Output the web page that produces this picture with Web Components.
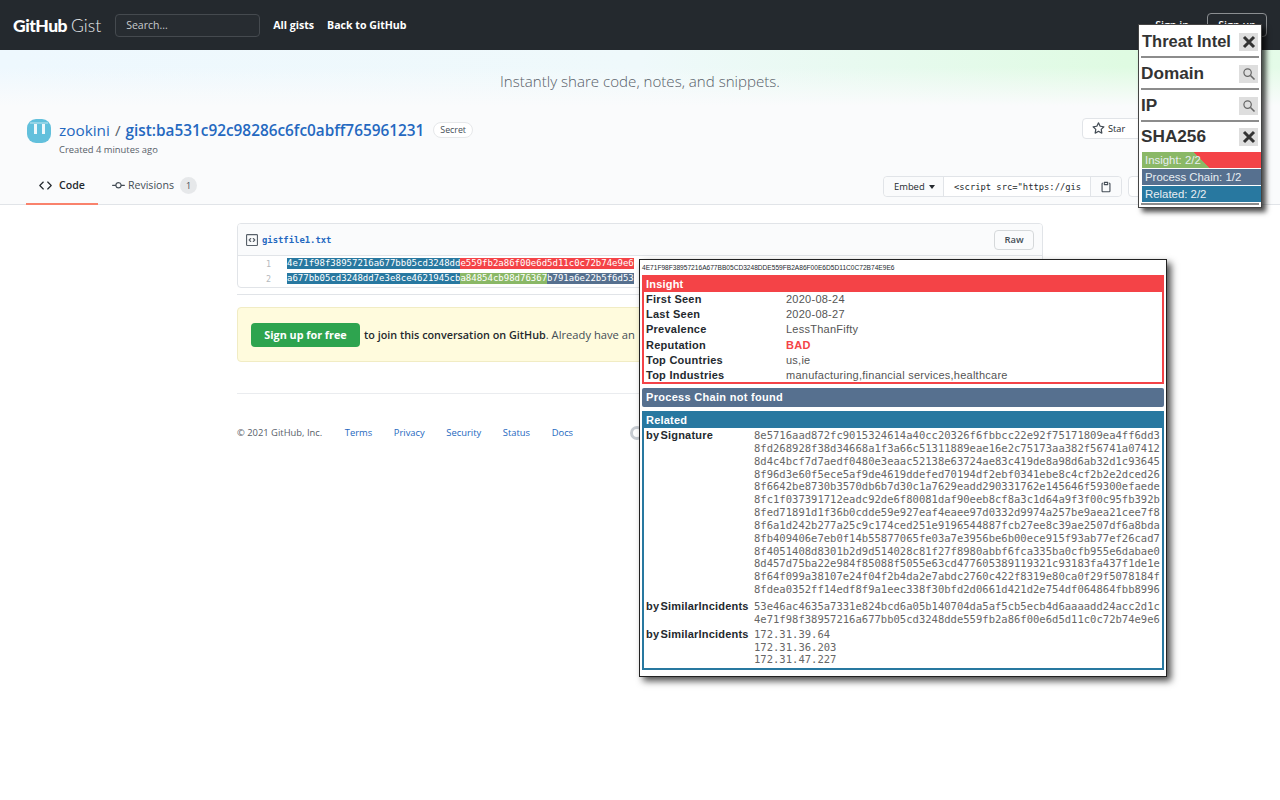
<!DOCTYPE html>
<html lang="en">
<head>
<meta charset="utf-8">
<title>Gist</title>
<style>
  html, body { margin: 0; height: 100%; background: #fff; }
  body { font-family: "Open Sans", "Liberation Sans", sans-serif; position: relative; height: 800px; overflow: hidden; }
</style>
</head>
<body>
<gist-header></gist-header>
<gist-banner>Instantly share code, notes, and snippets.</gist-banner>
<gist-pagehead></gist-pagehead>
<gist-main>
  <gist-file></gist-file>
  <signup-notice></signup-notice>
  <gist-footer></gist-footer>
</gist-main>
<threat-panel></threat-panel>
<intel-details></intel-details>

<script>
const ICONS = {
  code: 'M4.72 3.22a.75.75 0 011.06 1.06L2.06 8l3.72 3.72a.75.75 0 11-1.06 1.06L.47 8.53a.75.75 0 010-1.06l4.25-4.25zm6.56 0a.75.75 0 10-1.06 1.06L13.94 8l-3.72 3.72a.75.75 0 101.06 1.06l4.25-4.25a.75.75 0 000-1.06l-4.25-4.25z',
  commit: 'M10.5 7.75a2.5 2.5 0 11-5 0 2.5 2.5 0 015 0zm1.43.75a4.002 4.002 0 01-7.86 0H.75a.75.75 0 110-1.5h3.32a4.001 4.001 0 017.86 0h3.32a.75.75 0 110 1.5h-3.32z',
  star: 'M8 .25a.75.75 0 01.673.418l1.882 3.815 4.21.612a.75.75 0 01.416 1.279l-3.046 2.97.719 4.192a.75.75 0 01-1.088.791L8 12.347l-3.766 1.98a.75.75 0 01-1.088-.79l.72-4.194L.818 6.374a.75.75 0 01.416-1.28l4.21-.611L7.327.668A.75.75 0 018 .25zm0 2.445L6.615 5.5a.75.75 0 01-.564.41l-3.097.45 2.24 2.184a.75.75 0 01.216.664l-.528 3.084 2.769-1.456a.75.75 0 01.698 0l2.77 1.456-.53-3.084a.75.75 0 01.216-.664l2.24-2.183-3.096-.45a.75.75 0 01-.564-.41L8 2.694v.001z',
  clippy: 'M5.75 1a.75.75 0 00-.75.75v3c0 .414.336.75.75.75h4.5a.75.75 0 00.75-.75v-3a.75.75 0 00-.75-.75h-4.5zm.75 3V2.5h3V4h-3zm-2.874-.467a.75.75 0 00-.752-1.298A1.75 1.75 0 002 3.75v9.5c0 .966.784 1.75 1.75 1.75h8.5A1.75 1.75 0 0014 13.25v-9.5a1.75 1.75 0 00-.874-1.515.75.75 0 10-.752 1.298.25.25 0 01.126.217v9.5a.25.25 0 01-.25.25h-8.5a.25.25 0 01-.25-.25v-9.5a.25.25 0 01.126-.217z',
  file: 'M1.75 1.5a.25.25 0 00-.25.25v12.5c0 .138.112.25.25.25h12.5a.25.25 0 00.25-.25V1.75a.25.25 0 00-.25-.25H1.75zM0 1.75C0 .784.784 0 1.75 0h12.5C15.216 0 16 .784 16 1.75v12.5A1.75 1.75 0 0114.25 16H1.75A1.75 1.75 0 010 14.25V1.75zm9.22 3.72a.75.75 0 000 1.06L10.69 8 9.22 9.47a.75.75 0 101.06 1.06l2-2a.75.75 0 000-1.06l-2-2a.75.75 0 00-1.06 0zM6.78 6.53a.75.75 0 00-1.06-1.06l-2 2a.75.75 0 000 1.06l2 2a.75.75 0 101.06-1.06L5.31 8l1.47-1.47z'
};

function octicon(name, size, color) {
  return `<svg width="${size}" height="${size}" viewBox="0 0 16 16" fill="${color}" style="display:block;flex:none"><path fill-rule="evenodd" d="${ICONS[name]}"/></svg>`;
}

// small base class so each element only has to return its markup
class ShadowEl extends HTMLElement {
  constructor() {
    super();
    this.attachShadow({ mode: 'open' });
  }
  connectedCallback() {
    this.shadowRoot.innerHTML = this.render();
  }
}

class GistHeader extends ShadowEl {
  render() {
    return `
      <style>
        :host { display: flex; align-items: center; height: 50px; background: #24292e; color: #fff; padding: 0 13px; box-sizing: border-box; }
        .logo { display: flex; align-items: baseline; gap: 4px; font-size: 17.5px; letter-spacing: -.5px; margin-right: 14px; }
        .logo b { font-family: Lato, sans-serif; font-weight: 900; }
        .logo span { font-family: Lato, sans-serif; font-weight: 300; color: #e6e8ea; letter-spacing: 0; }
        .search { width: 145px; height: 23px; box-sizing: border-box; border: 1px solid #454a4f; border-radius: 4px; padding-left: 10px; font-size: 10.5px; line-height: 20px; color: #c8cbce; background: #272c31; margin-right: 13px; }
        nav { display: flex; gap: 13px; font-size: 10.6px; font-weight: 700; }
        .right { margin-left: auto; display: flex; align-items: center; gap: 18px; font-size: 10.6px; font-weight: 600; }
        .signup { border: 1px solid #8b8e91; border-radius: 4px; width: 60px; height: 24px; box-sizing: border-box; text-align: center; line-height: 23px; }
      </style>
      <div class="logo"><b>GitHub</b><span>Gist</span></div>
      <div class="search">Search...</div>
      <nav><span>All gists</span><span>Back to GitHub</span></nav>
      <div class="right"><span>Sign in</span><span class="signup">Sign up</span></div>
    `;
  }
}

class GistBanner extends ShadowEl {
  render() {
    return `
      <style>
        :host { display: flex; align-items: center; justify-content: center; height: 56px; box-sizing: border-box; padding-top: 6px; font-size: 15.1px; font-weight: 300; color: #586069;
          background: linear-gradient(180deg, rgba(250,251,252,0) 30%, #fafbfc 100%), linear-gradient(90deg, #eef8fe 0%, #eff9fb 50%, #dffbe2 88%, #e4fbe8 100%); }
      </style>
      <slot></slot>
    `;
  }
}

class GistPagehead extends ShadowEl {
  render() {
    return `
      <style>
        :host { display: flex; flex-direction: column; height: 99px; box-sizing: border-box; background: #fafbfc; border-bottom: 1px solid #e1e4e8; padding: 12px 0 0 27px; position: relative; color: #24292e; }
        .top { display: flex; align-items: flex-start; height: 54px; }
        .avatar { width: 24px; height: 24px; margin-right: 8px; flex: none; display: block; margin-top: 1px; }
        .title { display: flex; align-items: center; font-size: 15.35px; color: #586069; height: 24px; white-space: nowrap; }
        .title a { color: #2468c0; }
        .title b { font-weight: 600; color: #2468c0; }
        .sep { margin: 0 5px; }
        .badge { margin-left: 9px; font-size: 8.8px; color: #444d56; border: 1px solid #e6e8ea; border-radius: 9px; padding: 0 6px; height: 14px; line-height: 14px; background: #fff; }
        .meta { font-size: 9.4px; color: #586069; margin-top: 1px; }
        .act { margin-left: auto; margin-right: 126px; display: flex; align-items: center; gap: 3px; font-size: 9.2px; color: #24292e; height: 21px; width: 72px; box-sizing: border-box; border: 1px solid #e1e4e8; border-radius: 4px; background: #fff; padding-left: 9px; }
        .tabs { display: flex; height: 32px; margin-left: -1px; font-size: 10.6px; }
        .tab { display: flex; align-items: center; box-sizing: border-box; height: 32px; white-space: nowrap; }
        .tab.on { gap: 7px; height: 33px; padding: 0 13px 5px; border-bottom: 2px solid #f9826c; font-weight: 600; }
        .tab.rev { gap: 3px; padding: 0 0 6px 14px; color: #444d56; }
        .count { background: #e6e8ea; border-radius: 50%; width: 17px; height: 17px; line-height: 17px; text-align: center; font-size: 9px; margin-left: 3px; }
        .embed { position: absolute; left: 883px; top: 70px; display: flex; height: 21px; box-sizing: border-box; border: 1px solid #e1e4e8; border-radius: 4px; background: #fff; font-size: 9.4px; align-items: center; }
        .embed > span { display: flex; align-items: center; height: 100%; }
        .emb { width: 60px; padding-left: 10px; box-sizing: border-box; background: #fafbfc; border-right: 1px solid #e1e4e8; gap: 4px; border-radius: 4px 0 0 4px; }
        .caret { width: 0; height: 0; border: 3px solid transparent; border-top: 4px solid #24292e; border-bottom: 0; }
        .url { width: 147px; padding-left: 10px; box-sizing: border-box; border-right: 1px solid #e1e4e8; font-family: "DejaVu Sans Mono", monospace; font-size: 8.8px; color: #24292e; white-space: nowrap; }
        .clip { width: 30px; justify-content: center; background: #fafbfc; border-radius: 0 4px 4px 0; }
        .dl { position: absolute; left: 1128px; top: 70px; width: 60px; height: 21px; box-sizing: border-box; border: 1px solid #e1e4e8; border-radius: 4px; background: #fff; }
      </style>
      <div class="top">
        <svg class="avatar" viewBox="0 0 24 24">
          <rect width="24" height="24" rx="9" fill="#62c0dc"/>
          <path d="M3 3h18v2H3z" fill="#93d4e6"/>
          <rect x="7" y="5" width="3" height="10" fill="#eef8fb"/>
          <rect x="15" y="5" width="3" height="10" fill="#eef8fb"/>
        </svg>
        <div>
          <div class="title"><a>zookini</a><span class="sep">/</span><b>gist:ba531c92c98286c6fc0abff765961231</b><span class="badge">Secret</span></div>
          <div class="meta">Created 4 minutes ago</div>
        </div>
        <div class="act">${octicon('star', 13, '#444d56')}Star</div>
      </div>
      <div class="tabs">
        <div class="tab on">${octicon('code', 13, '#24292e')}Code</div>
        <div class="tab rev">${octicon('commit', 13, '#444d56')}Revisions<span class="count">1</span></div>
      </div>
      <div class="embed">
        <span class="emb">Embed<i class="caret"></i></span>
        <span class="url">&lt;script src="https://gis</span>
        <span class="clip">${octicon('clippy', 12, '#444d56')}</span>
      </div>
      <div class="dl"></div>
    `;
  }
}

class GistMain extends ShadowEl {
  render() {
    return `
      <style>
        :host { display: block; width: 806px; margin: 18px 0 0 237px; }
      </style>
      <slot></slot>
    `;
  }
}

class GistFile extends ShadowEl {
  render() {
    return `
      <style>
        :host { display: block; padding-bottom: 6px; border-bottom: 1px solid #e1e4e8; }
        .box { border: 1px solid #e1e4e8; border-radius: 4px; overflow: hidden; background: #fff; }
        .head { display: flex; align-items: center; height: 32px; padding: 0 8px; background: #fafbfc; border-bottom: 1px solid #e1e4e8; box-sizing: border-box; }
        .name { font-family: "DejaVu Sans Mono", monospace; font-weight: 700; font-size: 8.9px; color: #2468c0; margin-left: 4px; }
        .raw { margin-left: auto; width: 40px; height: 20px; line-height: 18px; box-sizing: border-box; text-align: center; font-size: 9.4px; font-weight: 600; border: 1px solid #d5d8da; border-radius: 4px; background: #fafbfc; color: #444d56; }
        .code { padding: 0 0 1px; font-family: "DejaVu Sans Mono", monospace; font-size: 9px; }
        .line { display: flex; height: 15px; align-items: center; white-space: nowrap; color: #fff; }
        .num { width: 33px; text-align: right; color: #b5b9bd; font-size: 8.4px; margin-right: 16px; flex: none; }
        .line span.h { height: 11px; line-height: 11px; }
        .blue { background: #2878a0; } .red { background: #f44347; } .green { background: #8ab866; } .slate { background: #56708f; }
      </style>
      <div class="box">
        <div class="head">${octicon('file', 12, '#586069')}<span class="name">gistfile1.txt</span><span class="raw">Raw</span></div>
        <div class="code">
          <div class="line"><span class="num">1</span><span class="h blue">4e71f98f38957216a677bb05cd3248dd</span><span class="h red">e559fb2a86f00e6d5d11c0c72b74e9e6</span></div>
          <div class="line"><span class="num">2</span><span class="h blue">a677bb05cd3248dd7e3e8ce4621945cb</span><span class="h green">a84854cb98d76367</span><span class="h slate">b791a6e22b5f6d53</span></div>
        </div>
      </div>
    `;
  }
}

class SignupNotice extends ShadowEl {
  render() {
    return `
      <style>
        :host { display: flex; align-items: center; gap: 4px; margin-top: 12px; height: 55px; box-sizing: border-box; padding-left: 13px; background: #fffbdd; border: 1px solid #f1ecc4; border-radius: 4px; font-size: 10.8px; color: #24292e; white-space: nowrap; }
        .btn { width: 109px; height: 24px; line-height: 24px; text-align: center; border-radius: 4px; background: #2ea44f; color: #fff; font-weight: 700; }
        .rest { color: #444d56; font-size: 11.2px; }
      </style>
      <span class="btn">Sign up for free</span>
      <span><span style="font-weight:600">to join this conversation on GitHub</span><span class="rest">. Already have an</span></span>
    `;
  }
}

class GistFooter extends ShadowEl {
  render() {
    return `
      <style>
        :host { display: flex; align-items: center; margin-top: 31px; height: 77px; border-top: 1px solid #eaecef; font-size: 9.4px; color: #586069; white-space: nowrap; }
        a { color: #2468c0; }
        .left { display: flex; width: 393px; }
        .links { display: flex; gap: 21.6px; margin-left: 22.6px; }
        .mark { width: 14px; height: 14px; border-radius: 50%; border: 3px solid #c6cbd1; box-sizing: border-box; }
      </style>
      <div class="left">
        <span>© 2021 GitHub, Inc.</span>
        <span class="links"><a>Terms</a><a>Privacy</a><a>Security</a><a>Status</a><a>Docs</a></span>
      </div>
      <span class="mark"></span>
    `;
  }
}

class ThreatPanel extends ShadowEl {
  render() {
    const row = (label, icon, cls = '') => `
      <div class="row ${cls}"><span>${label}</span><i class="btn">${icon === 'x'
        ? '<svg width="14" height="14" viewBox="0 0 14 14"><path d="M2 2l10 10M12 2L2 12" stroke="#333" stroke-width="3" fill="none"/></svg>'
        : '<svg width="14" height="14" viewBox="0 0 14 14"><circle cx="5.6" cy="5.6" r="3.7" stroke="#666" stroke-width="1.2" fill="none"/><path d="M8.5 8.5l4 4" stroke="#666" stroke-width="1.6" fill="none"/></svg>'}</i></div>`;
    return `
      <style>
        :host { position: absolute; left: 1138px; top: 24px; width: 124px; height: 184px; box-sizing: border-box; background: #fff; border: 1px solid #444; box-shadow: 4px 4px 5px rgba(0,0,0,.7); padding: 1px 2px 0; font-family: "Liberation Sans", Arial, sans-serif; color: #333; }
        .row { display: flex; align-items: center; justify-content: space-between; height: 32px; box-sizing: border-box; padding: 1px 1px 0 0; border-bottom: 2px solid #8c8c8c; font-weight: 700; font-size: 17.2px; white-space: nowrap; }
        .row.title span { padding-left: 1px; font-size: 16.5px; }
        .row.last { border-bottom: 0; height: 27px; padding-top: 2px; }
        .btn { display: flex; align-items: center; justify-content: center; width: 19px; height: 18px; background: #dedede; }
        .bar { height: 16px; line-height: 16px; margin: 0 -2px 1px 1px; padding-left: 3px; font-size: 11.4px; color: #e8eef2; white-space: nowrap; }
        .bar.first { margin-top: 3px; background: linear-gradient(45deg, #8ab866 50%, #f44347 50%); }
        .line { border-top: 2px solid #8c8c8c; }
      </style>
      ${row('Threat Intel', 'x', 'title')}
      ${row('Domain', 'search')}
      ${row('IP', 'search')}
      ${row('SHA256', 'x', 'last')}
      <div class="bar first">Insight: 2/2</div>
      <div class="bar" style="background:#56708f">Process Chain: 1/2</div>
      <div class="bar" style="background:#2878a0">Related: 2/2</div>
      <div class="line"></div>
    `;
  }
}

class IntelDetails extends ShadowEl {
  render() {
    const sig = `8e5716aad872fc9015324614a40cc20326f6fbbcc22e92f75171809ea4ff6dd3
8fd268928f38d34668a1f3a66c51311889eae16e2c75173aa382f56741a07412
8d4c4bcf7d7aedf0480e3eaac52138e63724ae83c419de8a98d6ab32d1c93645
8f96d3e60f5ece5af9de4619ddefed70194df2ebf0341ebe8c4cf2b2e2dced26
8f6642be8730b3570db6b7d30c1a7629eadd290331762e145646f59300efaede
8fc1f037391712eadc92de6f80081daf90eeb8cf8a3c1d64a9f3f00c95fb392b
8fed71891d1f36b0cdde59e927eaf4eaee97d0332d9974a257be9aea21cee7f8
8f6a1d242b277a25c9c174ced251e9196544887fcb27ee8c39ae2507df6a8bda
8fb409406e7eb0f14b55877065fe03a7e3956be6b00ece915f93ab77ef26cad7
8f4051408d8301b2d9d514028c81f27f8980abbf6fca335ba0cfb955e6dabae0
8d457d75ba22e984f85088f5055e63cd477605389119321c93183fa437f1de1e
8f64f099a38107e24f04f2b4da2e7abdc2760c422f8319e80ca0f29f5078184f
8fdea0352ff14edf8f9a1eec338f30bfd2d0661d421d2e754df064864fbb8996`;
    const sim = `53e46ac4635a7331e824bcd6a05b140704da5af5cb5ecb4d6aaaadd24acc2d1c
4e71f98f38957216a677bb05cd3248dde559fb2a86f00e6d5d11c0c72b74e9e6`;
    const ips = `172.31.39.64
172.31.36.203
172.31.47.227`;
    const kv = [
      ['First Seen', '2020-08-24'], ['Last Seen', '2020-08-27'], ['Prevalence', 'LessThanFifty'],
      ['Reputation', '<b class="bad">BAD</b>'], ['Top Countries', 'us,ie'], ['Top Industries', 'manufacturing,financial services,healthcare']
    ];
    return `
      <style>
        :host { position: absolute; left: 639px; top: 259px; width: 528px; height: 418px; box-sizing: border-box; background: #fff; border: 1px solid #222; box-shadow: 4px 4px 7px rgba(0,0,0,.7); padding: 0 2px; font-family: "Liberation Sans", Arial, sans-serif; color: #333; font-size: 11px; }
        .sha { height: 15px; line-height: 16px; font-size: 6.6px; color: #24292e; white-space: nowrap; }
        section { margin-bottom: 4px; border-radius: 2px 2px 0 0; }
        h4 { margin: 0; height: 17px; line-height: 18px; padding-left: 4px; font-size: 11px; font-weight: 700; letter-spacing: .2px; color: #fff; }
        .insight { border: 2px solid #f44347; border-top: 0; height: 109px; box-sizing: border-box; }
        .insight h4 { background: #f44347; margin: 0 -2px; }
        .kv { display: grid; grid-template-columns: 140px 1fr; grid-auto-rows: 15.2px; line-height: 15.2px; padding-left: 2px; letter-spacing: .25px; }
        .kv b { font-weight: 700; color: #24292e; }
        .kv span { color: #555; }
        .bad { color: #f44347 !important; }
        .chain { background: #56708f; height: 19px; line-height: 19px; padding-left: 4px; font-weight: 700; letter-spacing: .3px; color: #fff; border-radius: 2px; }
        .related { border: 2px solid #2878a0; border-top: 0; height: 259px; box-sizing: border-box; margin-bottom: 0; }
        .related h4 { background: #2878a0; margin: 0 -2px; }
        .rel { display: grid; grid-template-columns: 108px 1fr; padding-left: 2px; margin-top: 1px; }
        .rel + .rel { margin-top: 4px; }
        .rel + .rel + .rel { margin-top: 2px; }
        .rel b { line-height: 12.85px; letter-spacing: .2px; word-spacing: -2px; color: #24292e; white-space: nowrap; font-size: 11px; }
        .rel pre { margin: 0; font-family: "DejaVu Sans Mono", monospace; font-size: 10.5px; line-height: 12.85px; color: #666; letter-spacing: .02px; }
      </style>
      <div class="sha">4E71F98F38957216A677BB05CD3248DDE559FB2A86F00E6D5D11C0C72B74E9E6</div>
      <section class="insight">
        <h4>Insight</h4>
        <div class="kv">${kv.map(([k, v]) => `<b>${k}</b><span>${v}</span>`).join('')}</div>
      </section>
      <section class="chain">Process Chain not found</section>
      <section class="related">
        <h4>Related</h4>
        <div class="rel"><b>by Signature</b><pre>${sig}</pre></div>
        <div class="rel"><b>by SimilarIncidents</b><pre>${sim}</pre></div>
        <div class="rel"><b>by SimilarIncidents</b><pre>${ips}</pre></div>
      </section>
    `;
  }
}

customElements.define('gist-header', GistHeader);
customElements.define('gist-banner', GistBanner);
customElements.define('gist-pagehead', GistPagehead);
customElements.define('gist-main', GistMain);
customElements.define('gist-file', GistFile);
customElements.define('signup-notice', SignupNotice);
customElements.define('gist-footer', GistFooter);
customElements.define('threat-panel', ThreatPanel);
customElements.define('intel-details', IntelDetails);
</script>
</body>
</html>
